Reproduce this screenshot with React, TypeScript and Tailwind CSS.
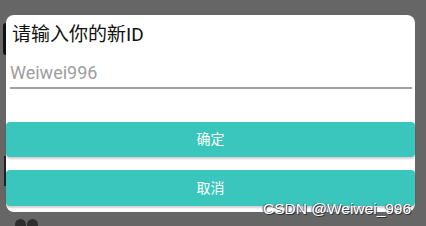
export default function App() {
  return (
    <div className="relative w-[426px] h-[226px] overflow-hidden bg-[#666666] pt-[15px] pl-[6px]">
      {/* stuff behind the dialog */}
      <div className="absolute left-[3px] top-[23px] w-[6px] h-[32px] rounded-l-[3px] bg-[#111]" />
      <div className="absolute left-[4px] top-[156px] w-[4px] h-[30px] bg-[#222]" />
      <div className="absolute left-[15px] top-[219px] flex gap-[1px]">
        <div className="w-[11px] h-[11px] rounded-full bg-[#2e2e2e]" />
        <div className="w-[11px] h-[11px] rounded-full bg-[#2e2e2e]" />
      </div>

      {/* dialog */}
      <div className="relative w-[409px] h-[197px] bg-white rounded-[8px] flex flex-col font-['Roboto','Noto_Sans_CJK_SC',sans-serif]">
        <div className="pt-[7px] pl-[6px] text-[19px] leading-[25px] text-[#111]">
          请输入你的新ID
        </div>
        <div className="mt-[14px] ml-[4px] mr-[3px] pb-[2px] border-b-2 border-[#a2a2a2] text-[18px] leading-[24px] text-[#9e9e9e]">
          Weiwei996
        </div>
        <div className="mt-[33px] flex flex-col gap-[13px]">
          <button className="h-[35px] rounded-[4px] bg-[#3ac6bc] text-white text-[14px] shadow-[0_2px_2px_rgba(0,0,0,0.18)]">
            确定
          </button>
          <button className="h-[36px] rounded-[4px] bg-[#3ac6bc] text-white text-[14px] shadow-[0_2px_2px_rgba(0,0,0,0.18)]">
            取消
          </button>
        </div>
      </div>

      {/* watermark */}
      <div className="absolute left-[263px] top-[200px] text-[15.5px] leading-[18px] text-white font-['Liberation_Sans',Arial,sans-serif] [text-shadow:1px_1px_0_#333,-1px_0_1px_#555]">
        CSDN @Weiwei_996
      </div>
    </div>
  );
}
